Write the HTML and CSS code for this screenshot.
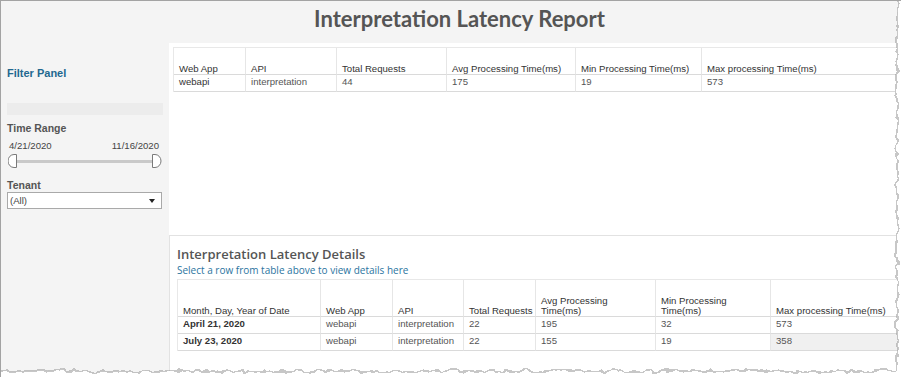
FILE: index.html
```html
<!DOCTYPE html>
<html>
<head>
<meta charset="utf-8">
<link rel="stylesheet" href="styles.css">
</head>
<body>
<div class="frame">
  <header class="hdr"><h1>Interpretation Latency Report</h1></header>
  <div class="body">
    <aside class="side">
      <div class="fp">Filter Panel</div>
      <div class="bar"></div>
      <div class="lbl">Time Range</div>
      <div class="dates"><span>4/21/2020</span><span>11/16/2020</span></div>
      <svg class="slider" width="154" height="15" viewBox="0 0 154 15">
        <rect x="8" y="6" width="138" height="3" fill="#c9c9c9"/>
        <path d="M8.5 0.5 L6 0.5 A6 6.5 0 0 0 6 13.5 L8.5 13.5 Z" fill="#fff" stroke="#7a7a7a"/>
        <path d="M144.5 0.5 L147 0.5 A6 6.5 0 0 1 147 13.5 L144.5 13.5 Z" fill="#fff" stroke="#7a7a7a"/>
      </svg>
      <div class="lbl tenant">Tenant</div>
      <div class="dd"><span>(All)</span><span class="caret"></span></div>
    </aside>
    <main class="main">
      <section class="top">
        <div class="grid t1">
          <div class="h">Web App</div>
          <div class="h">API</div>
          <div class="h">Total Requests</div>
          <div class="h">Avg Processing Time(ms)</div>
          <div class="h">Min Processing Time(ms)</div>
          <div class="h">Max processing Time(ms)</div>
          <div class="b">webapi</div>
          <div>interpretation</div>
          <div>44</div>
          <div>175</div>
          <div>19</div>
          <div>573</div>
        </div>
      </section>
      <section class="details">
        <h2>Interpretation Latency Details</h2>
        <p class="sub">Select a row from table above to view details here</p>
        <div class="grid t2">
          <div class="h">Month, Day, Year of Date</div>
          <div class="h">Web App</div>
          <div class="h">API</div>
          <div class="h">Total Requests</div>
          <div class="h">Avg Processing<br>Time(ms)</div>
          <div class="h">Min Processing<br>Time(ms)</div>
          <div class="h">Max processing Time(ms)</div>
          <div class="b">April 21, 2020</div>
          <div>webapi</div>
          <div>interpretation</div>
          <div>22</div>
          <div>195</div>
          <div>32</div>
          <div>573</div>
          <div class="b">July 23, 2020</div>
          <div>webapi</div>
          <div>interpretation</div>
          <div>22</div>
          <div>155</div>
          <div>19</div>
          <div class="hl">358</div>
        </div>
      </section>
    </main>
  </div>
  <svg class="torn" width="901" height="377" viewBox="0 0 901 377">
    <defs>
      <filter id="tear" filterUnits="userSpaceOnUse" x="-40" y="-40" width="1000" height="480">
        <feTurbulence type="fractalNoise" baseFrequency="0.12" numOctaves="2" seed="7" result="n"/>
        <feDisplacementMap in="SourceGraphic" in2="n" scale="8" xChannelSelector="R" yChannelSelector="G"/>
      </filter>
    </defs>
    <g filter="url(#tear)">
      <path d="M897 -30 L897 371 L-30 371 L-30 420 L940 420 L940 -30 Z" fill="#fff" stroke="#8f8f8f" stroke-width="1"/>
    </g>
  </svg>
</div>
</body>
</html>
```
FILE: styles.css
```css
body {
  margin: 0;
  background: #fff;
  font-family: "Liberation Sans", Arial, sans-serif;
}
.frame {
  position: relative;
  width: 901px;
  height: 377px;
  box-sizing: border-box;
  overflow: hidden;
  border-top: 1px solid #a3a3a3;
  border-left: 1px solid #a3a3a3;
  background: #f4f4f4;
  display: flex;
  flex-direction: column;
}
.hdr {
  height: 42px;
  flex: none;
  box-sizing: border-box;
  padding: 5px 0 0 17px;
  text-align: center;
}
.hdr h1 {
  margin: 0;
  font: 700 22px/26px Lato, sans-serif;
  color: #555;
}
.body {
  flex: 1;
  display: flex;
  min-height: 0;
}
.side {
  width: 168px;
  flex: none;
  box-sizing: border-box;
  padding-left: 6px;
  display: flex;
  flex-direction: column;
  align-items: flex-start;
}
.fp {
  margin-top: 24px;
  font-size: 11px;
  line-height: 13px;
  font-weight: 700;
  color: #22688f;
}
.bar {
  margin-top: 23px;
  width: 156px;
  height: 12px;
  background: #ececec;
}
.lbl {
  margin-top: 7px;
  font-size: 10.5px;
  line-height: 12px;
  font-weight: 700;
  color: #555;
}
.dates {
  margin-top: 6px;
  width: 156px;
  box-sizing: border-box;
  padding: 0 4px 0 2px;
  display: flex;
  justify-content: space-between;
  font-size: 9.6px;
  line-height: 11px;
  color: #444;
}
.slider {
  display: block;
  margin: 3px 0 0 1px;
}
.lbl.tenant {
  margin-top: 10px;
}
.dd {
  margin-top: 1px;
  width: 155px;
  height: 17px;
  box-sizing: border-box;
  border: 1px solid #a9a9a9;
  background: #fff;
  display: flex;
  align-items: center;
  justify-content: space-between;
  padding: 0 6px 0 2px;
  font-size: 9.6px;
  color: #444;
}
.caret {
  width: 0;
  height: 0;
  border-left: 3px solid transparent;
  border-right: 3px solid transparent;
  border-top: 4px solid #222;
}
.main {
  flex: 1;
  min-width: 0;
  background: #fff;
  display: flex;
  flex-direction: column;
}
.top {
  flex: none;
  height: 192px;
  box-sizing: border-box;
  padding: 4px 0 0 4px;
}
.details {
  flex: 1;
  border-top: 1px solid #e2e2e2;
  border-left: 1px solid #e2e2e2;
  padding-left: 7px;
}
.details h2 {
  margin: 9px 0 0;
  font: 600 13px/18px "Open Sans", sans-serif;
  color: #555;
}
.sub {
  margin: 0;
  font: 400 10px/14px "Open Sans", sans-serif;
  color: #2b74a0;
}
.grid {
  display: grid;
  width: max-content;
  border-top: 1px solid #e8e8e8;
  border-left: 1px solid #e8e8e8;
}
.grid > div {
  box-sizing: border-box;
  border-right: 1px solid #e6e6e6;
  border-bottom: 1px solid #dadada;
  padding: 0 0 0 5px;
  font-size: 9.6px;
  line-height: 14px;
  color: #555;
  white-space: nowrap;
  overflow: hidden;
}
.grid > .h {
  display: flex;
  align-items: flex-end;
  line-height: 11px;
  color: #333;
}
.grid > .b {
  color: #333;
}
.t1 {
  grid-template-columns: 72px 91px 110px 129px 126px 200px;
  grid-template-rows: 27px 17px;
}
.t2 {
  margin-top: 2px;
  grid-template-columns: 143px 72px 71px 72px 120px 115px 140px;
  grid-template-rows: 37px 17px 17px;
}
.t2 > .h {
  line-height: 10px;
}
.t2 > .b {
  font-weight: 700;
}
.grid > .hl {
  background: #f0f0f0;
}
.torn {
  position: absolute;
  left: -1px;
  top: -1px;
  pointer-events: none;
}
```
